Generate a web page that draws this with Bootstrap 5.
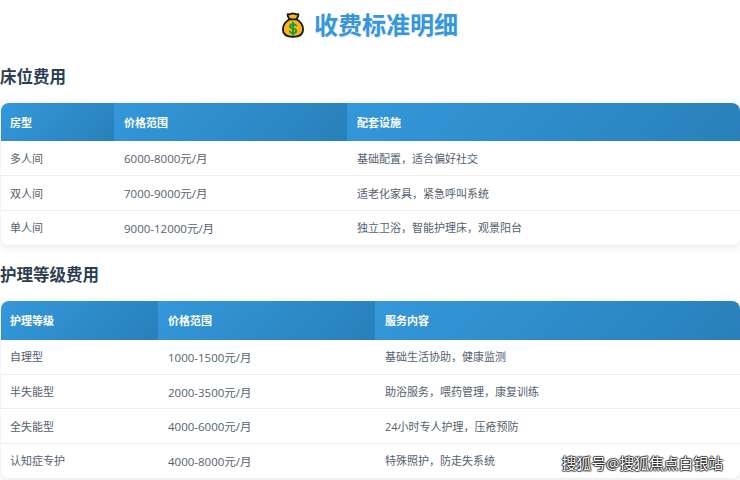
<!DOCTYPE html>
<html lang="zh-CN">
<head>
<meta charset="utf-8">
<title>收费标准明细</title>
<link href="https://cdn.jsdelivr.net/npm/bootstrap@5.3.0/dist/css/bootstrap.min.css" rel="stylesheet">
<style>
html, body { height: 480px; overflow: hidden; }
body { font-family: "Open Sans", "Noto Sans CJK SC", sans-serif; color: #2c3e50; background: #fff; position: relative; }
.page-title { font-size: 24px; line-height: 34px; font-weight: 700; color: #3498db; margin: 8px 0 0; height: 34px; text-shadow: 1px 1px 2px rgba(0,0,0,.1); gap: 10px; }
.bag { width: 22px; height: 28px; }
.sec-title { font-size: 16.5px; line-height: 22px; font-weight: 700; color: #2c3e50; margin: 0; padding: 0; }
.sec-a { margin-top: 24px; }
.sec-b { margin-top: 19px; }
.fee-wrap { margin: 15px 0 0 1px; border-radius: 8px; overflow: hidden; box-shadow: 0 2px 10px rgba(0,0,0,.1); }
.fee-table { margin: 0; width: 100%; table-layout: fixed; font-size: 11px; border-collapse: collapse; }
.fee-table th { background: linear-gradient(135deg, #3498db, #2980b9); color: #fff; font-weight: 700; padding: 2px 10px 0; height: 38px; vertical-align: middle; border: 0; box-shadow: none; }
.fee-table td { padding: 2px 10px 0; height: 34.5px; vertical-align: middle; color: #55616e; border: 0; border-bottom: 1px solid #eee; background: #fff; box-shadow: none; }
.fee-table th:first-child, .fee-table td:first-child { padding-left: 9px; }
.fee-table td.price { font-size: 11.5px; }
.fee-table tr:last-child td { border-bottom: 0; }
.tb-b th { height: 39px; }
.c1a { width: 113px; } .c2a { width: 233px; }
.c1b { width: 157px; } .c2b { width: 217px; }
.wm { position: absolute; right: 17px; top: 453px; font-size: 14.8px; line-height: 20px; color: #fff; text-shadow: 0 0 1px rgba(0,0,0,.7), 1px 0 1px rgba(0,0,0,.7), -1px 0 1px rgba(0,0,0,.7), 0 1px 1px rgba(0,0,0,.7), 0 -1px 1px rgba(0,0,0,.7); }
</style>
</head>
<body>
<h1 class="page-title d-flex justify-content-center align-items-center">
<svg class="bag" viewBox="0 0 24 28" aria-hidden="true">
<path d="M6.500 2c2 1.200 3.500-.6 5.500-.6s3.500 1.800 5.500.6c1.200.6-.2 3.800-2 5.500 4.500 2.500 7.500 6.500 7.500 11.500 0 5-4 8-11 8S1 24 1 19c0-5 3-9 7.500-11.500-1.800-1.700-3.200-4.900-2-5.500z" fill="#fdb515" stroke="#151515" stroke-width="2" stroke-linejoin="round"/>
<path d="M8.500 7.800h7" stroke="#151515" stroke-width="2" stroke-linecap="round"/>
<path d="M15.400 14.700c-.6-1.100-1.800-1.600-3.400-1.600-1.900 0-3.200.9-3.200 2.400 0 3.200 6.800 1.700 6.800 4.900 0 1.500-1.500 2.500-3.500 2.500-1.700 0-2.900-.6-3.600-1.800M12 11.200v13.700" fill="none" stroke="#169c3b" stroke-width="2.100" stroke-linecap="round"/>
</svg>
<span>收费标准明细</span>
</h1>

<h2 class="sec-title sec-a">床位费用</h2>
<div class="fee-wrap">
<table class="table fee-table">
<colgroup><col class="c1a"><col class="c2a"><col></colgroup>
<thead><tr><th>房型</th><th>价格范围</th><th>配套设施</th></tr></thead>
<tbody>
<tr><td>多人间</td><td class="price">6000-8000元/月</td><td>基础配置，适合偏好社交</td></tr>
<tr><td>双人间</td><td class="price">7000-9000元/月</td><td>适老化家具，紧急呼叫系统</td></tr>
<tr><td>单人间</td><td class="price">9000-12000元/月</td><td>独立卫浴，智能护理床，观景阳台</td></tr>
</tbody>
</table>
</div>

<h2 class="sec-title sec-b">护理等级费用</h2>
<div class="fee-wrap">
<table class="table fee-table tb-b">
<colgroup><col class="c1b"><col class="c2b"><col></colgroup>
<thead><tr><th>护理等级</th><th>价格范围</th><th>服务内容</th></tr></thead>
<tbody>
<tr><td>自理型</td><td class="price">1000-1500元/月</td><td>基础生活协助，健康监测</td></tr>
<tr><td>半失能型</td><td class="price">2000-3500元/月</td><td>助浴服务，喂药管理，康复训练</td></tr>
<tr><td>全失能型</td><td class="price">4000-6000元/月</td><td>24小时专人护理，压疮预防</td></tr>
<tr><td>认知症专护</td><td class="price">4000-8000元/月</td><td>特殊照护，防走失系统</td></tr>
</tbody>
</table>
</div>
<div class="wm">搜狐号@搜狐焦点白银站</div>
<script src="https://cdn.jsdelivr.net/npm/bootstrap@5.3.0/dist/js/bootstrap.bundle.min.js"></script>
</body>
</html>
